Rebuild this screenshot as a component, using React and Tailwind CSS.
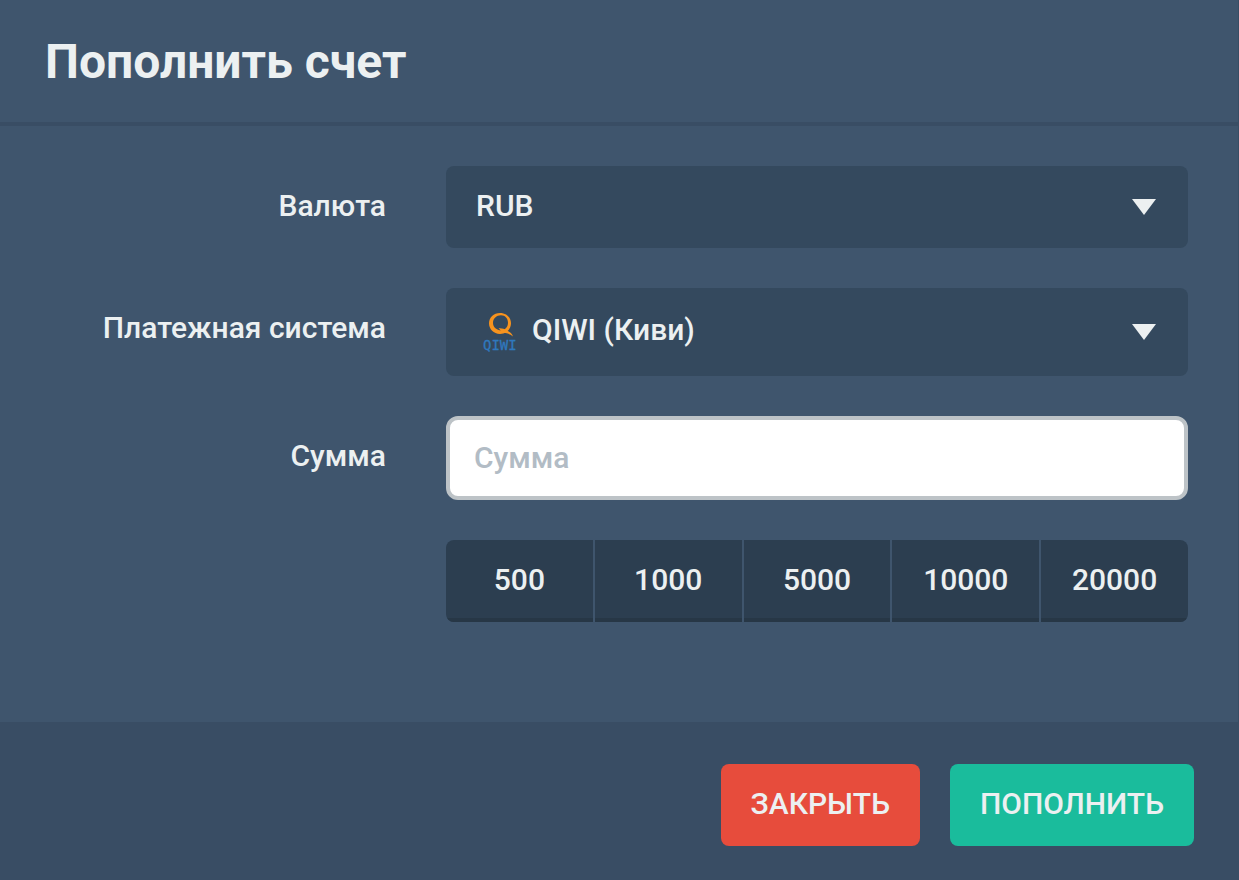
import React, { useState } from "react";

const amounts = [500, 1000, 5000, 10000, 20000];

const Arrow = () => (
    <svg className="pointer-events-none absolute right-8 top-1/2 -translate-y-1/2 w-6 h-4" viewBox="0 0 24 16" aria-hidden="true">
        <path d="M0 0h24L12 16z" fill="#ecf0f1" />
    </svg>
);

const QiwiLogo = () => (
    <svg className="pointer-events-none absolute left-9 top-1/2 -translate-y-1/2 w-9 h-11" viewBox="0 0 36 44" aria-hidden="true">
        <path
            d="M18 3C11.600 3 7 7.500 7 13.300S11.600 24 18 24s11-4.900 11-10.700S24.400 3 18 3zm1 2.300c4.300 0 7 3.200 7 7.400s-2.900 7.500-7 7.500-8-3-8-7.300 3.500-7.600 8-7.600z"
            fill="#f7931e"
            fillRule="evenodd"
        />
        <path d="M16.500 18.200c3.500-.3 6 .6 8 2.200 2.700.8 5.200 2.600 6.500 6.100-2.800-2.500-6-3.400-9.500-3.400z" fill="#f7931e" />
        <text x="1" y="40" fontFamily="DejaVu Sans Mono, monospace" fontSize="14" fill="#2f78bd" stroke="#2f78bd" strokeWidth="0.3">QIWI</text>
    </svg>
);

const Row = ({ label, id, children }) => (
    <div className="grid grid-cols-3">
        <div className="px-[30px] pt-[18px] text-right leading-11">
            {label && <label htmlFor={id}>{label}</label>}
        </div>
        <div className="col-span-2 px-[30px]">{children}</div>
    </div>
);

const App = () => {

    const [currency, setCurrency] = useState("RUB");
    const [system, setSystem] = useState("qiwi");
    const [sum, setSum] = useState("");

    const submitHandler = (event) => {
        event.preventDefault();
    };

    return (
        <form
            onSubmit={submitHandler}
            className="flex min-h-screen flex-col border-r border-[#394d64] bg-[#3f556d] font-[Roboto,sans-serif] text-[30px] font-medium text-[#ecf0f1]"
        >
            <header className="border-b-4 border-[#394d64] px-[45px] pt-8 pb-[30px]">
                <h1 className="text-5xl leading-[60px] font-bold">Пополнить счет</h1>
            </header>

            <main className="flex flex-1 flex-col gap-10 pt-10 pb-25 pl-[15px] pr-5">
                <Row label="Валюта" id="currency">
                    <div className="relative">
                        <select
                            id="currency"
                            value={currency}
                            onChange={(e) => setCurrency(e.target.value)}
                            className="block h-[82px] w-full appearance-none rounded-lg bg-[#34495e] pl-[30px] pr-16 pb-1"
                        >
                            <option value="RUB">RUB</option>
                        </select>
                        <Arrow />
                    </div>
                </Row>

                <Row label="Платежная система" id="system">
                    <div className="relative">
                        <QiwiLogo />
                        <select
                            id="system"
                            value={system}
                            onChange={(e) => setSystem(e.target.value)}
                            className="block h-[88px] w-full appearance-none rounded-lg bg-[#34495e] pl-[86px] pr-16 pb-1.5"
                        >
                            <option value="qiwi">QIWI (Киви)</option>
                        </select>
                        <Arrow />
                    </div>
                </Row>

                <Row label="Сумма" id="sum">
                    <input
                        id="sum"
                        type="text"
                        value={sum}
                        onChange={(e) => setSum(e.target.value)}
                        placeholder="Сумма"
                        className="block h-[84px] w-full rounded-xl border-4 border-[#bdc3c7] bg-white px-6 pb-0.5 text-[#34495e] placeholder:text-[#b2bcc5]"
                    />
                </Row>

                <Row>
                    <div className="grid grid-cols-5 gap-0.5 overflow-hidden rounded-lg">
                        {
                            amounts.map((item) => (
                                <button
                                    key={item}
                                    type="button"
                                    onClick={() => setSum(String(item))}
                                    className="h-[82px] border-b-4 border-[#273746] bg-[#2c3e50]"
                                >
                                    {item}
                                </button>
                            ))
                        }
                    </div>
                </Row>
            </main>

            <footer className="flex justify-end gap-[30px] bg-[#394d64] px-11 pt-[42px] pb-[34px]">
                <button type="button" className="h-[82px] rounded-lg bg-[#e74c3c] px-[30px] pb-1 uppercase">Закрыть</button>
                <button type="submit" className="h-[82px] rounded-lg bg-[#1abc9c] px-[30px] pb-1 uppercase">Пополнить</button>
            </footer>
        </form>
    );
};

export default App;
